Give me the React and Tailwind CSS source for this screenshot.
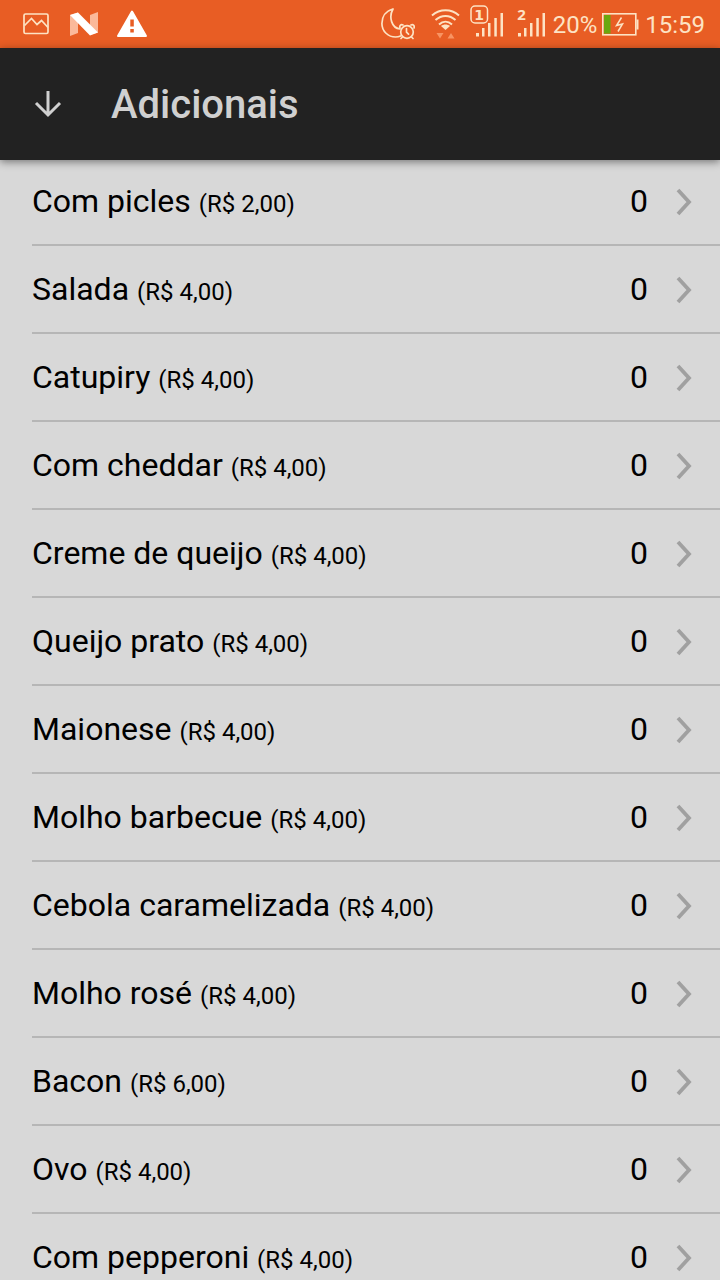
const extras = [
  { name: "Com picles", price: "2,00" },
  { name: "Salada", price: "4,00" },
  { name: "Catupiry", price: "4,00" },
  { name: "Com cheddar", price: "4,00" },
  { name: "Creme de queijo", price: "4,00" },
  { name: "Queijo prato", price: "4,00" },
  { name: "Maionese", price: "4,00" },
  { name: "Molho barbecue", price: "4,00" },
  { name: "Cebola caramelizada", price: "4,00" },
  { name: "Molho rosé", price: "4,00" },
  { name: "Bacon", price: "6,00" },
  { name: "Ovo", price: "4,00" },
  { name: "Com pepperoni", price: "4,00" },
];

const PictureIcon = () => (
  <svg width="26" height="22" viewBox="0 0 26 22" fill="none" stroke="#fde3c4" strokeWidth="1.7">
    <rect x="1" y="1" width="24" height="19.5" rx="1.5" />
    <path d="M1.5 12.5 8.500 5.500l5.500 6 4.500-4 6.500 7" />
  </svg>
);

const NougatIcon = () => (
  <svg width="28" height="24" viewBox="0 0 28 24">
    <path d="M0 3 8 .5v20.500L0 24z" fill="#fbb99a" />
    <path d="M20 3 28 0v20.500L20 23z" fill="#fbb99a" />
    <path d="M0 3 8 .5 28 20.500 20 23.500z" fill="#fff" />
  </svg>
);

const WarningIcon = () => (
  <svg width="32" height="28" viewBox="0 0 32 28">
    <path d="M16 1.500 30 26H2z" fill="#fff" stroke="#fff" strokeWidth="2" strokeLinejoin="round" />
    <path d="M14.300 9.500h3.500v7h-3.500zM14.300 19h3.500v3.500h-3.500z" fill="#e85d24" />
  </svg>
);

const MoonAlarmIcon = () => (
  <svg width="34" height="32" viewBox="0 0 34 32" fill="none" stroke="#fde3c4" strokeWidth="1.7" strokeLinecap="round">
    <path d="M12 1C4.500 3 .9 9 .9 15.500c0 8 6.500 13.500 13.600 13.500 2 0 3.500-.3 5-1M12 1c-4.500 8-1.500 19 7 20" />
    <circle cx="26" cy="24" r="6.300" />
    <path d="M25.500 20.500v3.700l2 2M19 20c-.8-2 .7-4 3-3M33 20c.8-2-.7-4-3-3M21.500 29l-1.500 1.500M30.500 29l1.500 1.500" />
  </svg>
);

const WifiIcon = () => (
  <svg width="30" height="30" viewBox="0 0 30 30" fill="none" stroke="#fde3c4" strokeWidth="2">
    <path d="M1 6.500c8-7 19-7 27 0M4.500 11c6-5.500 14-5.500 20 0M8 15.500c4-3.700 9-3.700 13 0" />
    <path d="M14.500 21l-4.500-4c2.500-2 6.500-2 9 0z" fill="#fde3c4" stroke="none" />
    <path d="M5.500 24h7L9 29.500zM16.500 29.500h7L20 24z" fill="#f89463" stroke="none" />
  </svg>
);

const FirstSimIcon = () => (
  <svg className="overflow-visible" width="34" height="34" viewBox="0 0 34 34" fill="#fde3c4">
    <rect x="1" y="1" width="16.500" height="17" rx="4" fill="none" stroke="#fde3c4" strokeWidth="1.5" />
    <text x="9.200" y="14.500" textAnchor="middle" className="font-['DejaVu_Sans'] text-[14px] font-bold">
      1
    </text>
    <path d="M6 28h3v3.500H6zM12 23h2.500v8.500H12zM18 18h2.500v13.500H18zM24.300 13h2.500v18.500h-2.500zM30.500 8H33v23.500h-2.500z" />
  </svg>
);

const SecondSimIcon = () => (
  <svg className="overflow-visible" width="34" height="34" viewBox="0 0 34 34" fill="#fde3c4">
    <text x="5.500" y="14.500" textAnchor="middle" className="font-['Noto_Sans'] text-[15px] font-bold">
      2
    </text>
    <path d="M2 28h3v3.500H2zM8 23h2.500v8.500H8zM14 18h2.500v13.500H14zM20.300 13h2.500v18.500h-2.500zM26.500 8H29v23.500h-2.500z" />
  </svg>
);

const BatteryIcon = () => (
  <svg width="37" height="23" viewBox="0 0 37 23">
    <rect x=".8" y=".8" width="33" height="21" fill="none" stroke="#fde3c4" strokeWidth="1.600" />
    <rect x="2" y="2" width="6.500" height="18.600" fill="#6aa80e" />
    <path d="M34.500 6.500h2v10h-2z" fill="#fde3c4" />
    <path d="M19.500 4.500 14.500 12.500l6-1.500-4.500 7.500" fill="none" stroke="#fde3c4" strokeWidth="1.500" />
  </svg>
);

const StatusBar = () => (
  <div className="flex h-12 shrink-0 items-center justify-between bg-[#e85d24] pr-[15px] pl-[23px] text-2xl text-[#fde3c4]">
    <div className="flex items-center">
      <PictureIcon />
      <div className="ml-[21px]">
        <NougatIcon />
      </div>
      <div className="ml-[18px]">
        <WarningIcon />
      </div>
    </div>
    <div className="flex items-center">
      <MoonAlarmIcon />
      <div className="ml-4">
        <WifiIcon />
      </div>
      <div className="-mt-[5px] ml-[9px] flex gap-[12px]">
        <FirstSimIcon />
        <SecondSimIcon />
      </div>
      <span className="mt-[2px] ml-[3px]">20%</span>
      <div className="ml-[5px]">
        <BatteryIcon />
      </div>
      <span className="mt-[2px] ml-[6px]">15:59</span>
    </div>
  </div>
);

const Header = () => (
  <header className="relative z-10 flex h-28 shrink-0 items-center bg-[#222222] pl-[34px] text-[#d0d0d0] shadow-[0_2px_8px_rgba(0,0,0,0.45)]">
    <svg width="28" height="28" viewBox="0 0 28 28" fill="none" stroke="currentColor" strokeWidth="3">
      <path d="M14 1v24M2 13l12 12 12-12" />
    </svg>
    <h1 className="mt-[2px] ml-[49px] text-[40px] leading-none font-medium">Adicionais</h1>
  </header>
);

const ExtraRow = ({ extra }) => (
  <li className="ml-8 flex h-[88px] shrink-0 items-center border-b-2 border-[#b6b6b6] pr-7">
    <p className="grow text-[32px] leading-none text-black">
      {extra.name} <span className="text-2xl leading-none">(R$ {extra.price})</span>
    </p>
    <span className="text-[32px] leading-none text-black">0</span>
    <svg
      className="mt-[2px] ml-7"
      width="16"
      height="28"
      viewBox="0 0 16 28"
      fill="none"
      stroke="#a0a0a0"
      strokeWidth="3.800"
    >
      <path d="M2 2l11 12L2 26" />
    </svg>
  </li>
);

const App = () => {
  return (
    <div className="flex h-[1280px] w-[720px] flex-col overflow-hidden bg-[#d8d8d8] font-[Roboto,sans-serif]">
      <StatusBar />
      <Header />
      {/* list is scrolled slightly under the header */}
      <ul className="-mt-[2px] flex flex-col">
        {extras.map((extra) => (
          <ExtraRow key={extra.name} extra={extra} />
        ))}
      </ul>
    </div>
  );
};

export default App;
